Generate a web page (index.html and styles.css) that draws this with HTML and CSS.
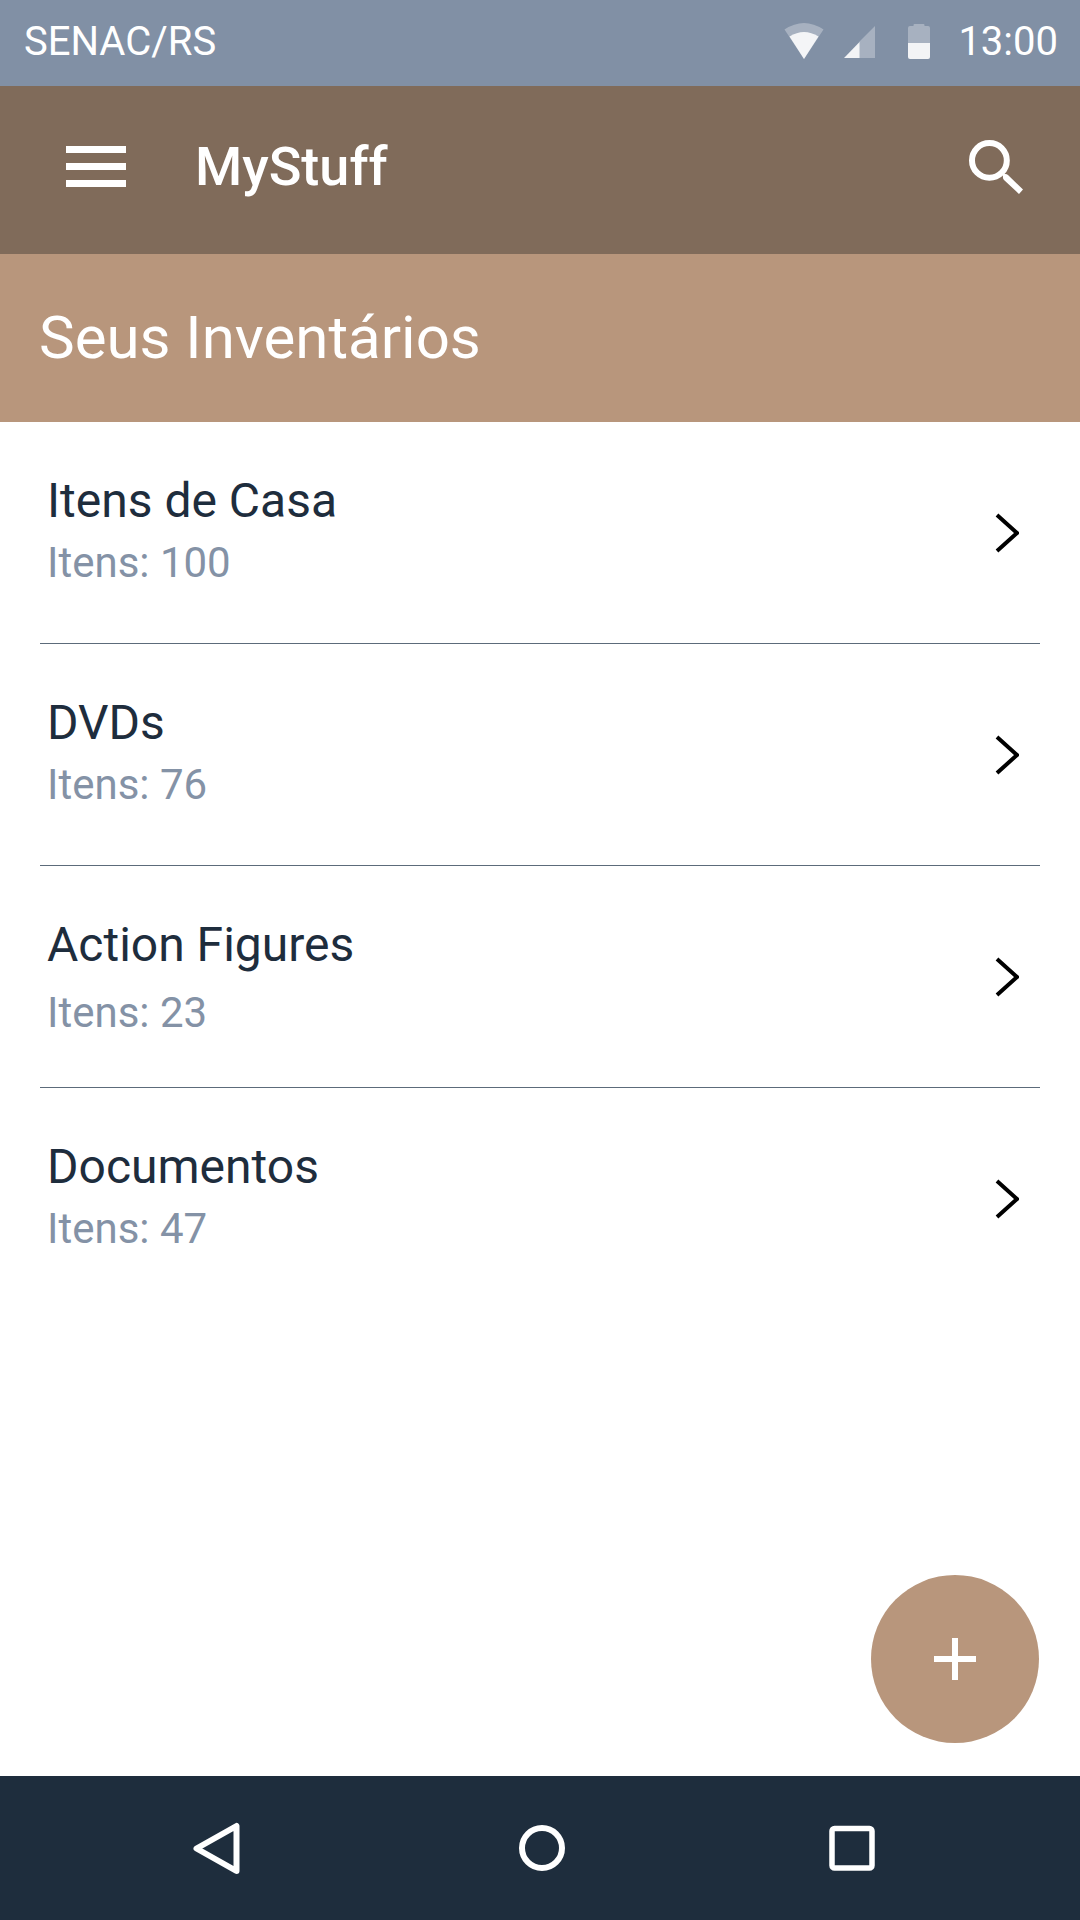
FILE: index.html
```html
<!DOCTYPE html>
<html lang="pt-BR">
<head>
<meta charset="utf-8">
<meta name="viewport" content="width=device-width, initial-scale=1">
<title>MyStuff</title>
<link rel="stylesheet" href="styles.css">
</head>
<body>
<div class="status-bar">
  <span class="carrier">SENAC/RS</span>
  <div class="status-icons">
    <svg class="wifi" width="40" height="40" viewBox="0 0 40 40" aria-hidden="true">
      <path d="M0.5 7.500Q20-5.500 39.500 7.500L20 37Z" fill="#fff" fill-opacity=".3"/>
      <path d="M5.500 14.500Q20 5.500 34.500 14.500L20 37Z" fill="#fff" fill-opacity=".87"/>
    </svg>
    <svg class="signal" width="32" height="40" viewBox="0 0 32 40" aria-hidden="true">
      <path d="M31 4V36H15V20Z" fill="#fff" fill-opacity=".3"/>
      <path d="M15.500 20V36H0Z" fill="#fff" fill-opacity=".9"/>
    </svg>
    <svg class="battery" width="22" height="40" viewBox="0 0 22 40" aria-hidden="true">
      <path d="M0 21V6Q0 4 2 4H5.500V3Q5.500 2 6.500 2H15.500Q16.500 2 16.500 3V4H20Q22 4 22 6V21Z" fill="#fff" fill-opacity=".3"/>
      <path d="M0 21H22V35Q22 37 20 37H2Q0 37 0 35Z" fill="#fff" fill-opacity=".9"/>
    </svg>
    <time class="clock">13:00</time>
  </div>
</div>
<header class="app-bar">
  <button class="icon-button" type="button" aria-label="Menu">
    <svg width="60" height="42" viewBox="0 0 60 42" shape-rendering="crispEdges"><path d="M0 0H60V7H0ZM0 17H60V24H0ZM0 34H60V41H0Z" fill="#fff"/></svg>
  </button>
  <h1 class="app-name">MyStuff</h1>
  <button class="icon-button" type="button" aria-label="Buscar">
    <svg width="54" height="54" viewBox="0 0 54 54"><circle cx="20.400" cy="20.400" r="17.400" fill="none" stroke="#fff" stroke-width="6"/><path d="M31 32L34 31L35.500 34Q37.500 33.500 39 35L54 49.500L50 54L35 40Q33.500 38.500 34 35.500Z" fill="#fff"/></svg>
  </button>
</header>
<main class="content">
  <h2 class="section-title">Seus Inventários</h2>
  <ul class="inventories">
    <li><a class="inventory" href="#casa">
      <span class="inventory-text"><span class="inventory-name">Itens de Casa</span><span class="inventory-count">Itens: 100</span></span>
      <svg class="chevron" width="24" height="40" viewBox="0 0 24 40" aria-hidden="true"><path d="M2 2L22 20L2 38"/></svg>
    </a></li>
    <li><a class="inventory" href="#dvds">
      <span class="inventory-text"><span class="inventory-name">DVDs</span><span class="inventory-count">Itens: 76</span></span>
      <svg class="chevron" width="24" height="40" viewBox="0 0 24 40" aria-hidden="true"><path d="M2 2L22 20L2 38"/></svg>
    </a></li>
    <li><a class="inventory" href="#figures">
      <span class="inventory-text spaced"><span class="inventory-name">Action Figures</span><span class="inventory-count">Itens: 23</span></span>
      <svg class="chevron" width="24" height="40" viewBox="0 0 24 40" aria-hidden="true"><path d="M2 2L22 20L2 38"/></svg>
    </a></li>
    <li><a class="inventory" href="#documentos">
      <span class="inventory-text"><span class="inventory-name">Documentos</span><span class="inventory-count">Itens: 47</span></span>
      <svg class="chevron" width="24" height="40" viewBox="0 0 24 40" aria-hidden="true"><path d="M2 2L22 20L2 38"/></svg>
    </a></li>
  </ul>
  <button class="add-button" type="button" aria-label="Adicionar inventário">
    <svg width="42" height="42" viewBox="0 0 42 42"><path d="M18 0H24V18H42V24H24V42H18V24H0V18H18Z" fill="#fff"/></svg>
  </button>
</main>
<nav class="system-nav" aria-label="Sistema">
  <button class="icon-button" type="button" aria-label="Voltar">
    <svg width="48" height="52" viewBox="0 0 48 52"><path d="M43.500 4V49L3.500 26.500Z" fill="none" stroke="#fff" stroke-width="6" stroke-linejoin="round"/></svg>
  </button>
  <button class="icon-button" type="button" aria-label="Início">
    <svg width="48" height="48" viewBox="0 0 48 48"><circle cx="24" cy="24" r="20" fill="none" stroke="#fff" stroke-width="6"/></svg>
  </button>
  <button class="icon-button" type="button" aria-label="Recentes">
    <svg width="48" height="48" viewBox="0 0 48 48"><rect x="4" y="4.500" width="40" height="39.500" rx="2.500" fill="none" stroke="#fff" stroke-width="5.500"/></svg>
  </button>
</nav>
</body>
</html>
```
FILE: styles.css
```css
* {
  box-sizing: border-box;
}

body {
  margin: 0;
  min-height: 100vh;
  display: flex;
  flex-direction: column;
  background: #fff;
  color: #1e2d3d;
  font-family: Roboto, "Liberation Sans", sans-serif;
}

button {
  border: 0;
  padding: 0;
  background: none;
  cursor: pointer;
}

svg {
  display: block;
}

.status-bar {
  display: flex;
  justify-content: space-between;
  align-items: center;
  min-height: 86px;
  padding: 0 22px 2px 24px;
  background: #8190a5;
  color: #fff;
  font-size: 40px;
  line-height: 48px;
}

.status-icons {
  display: flex;
  align-items: center;
}

.signal {
  margin-left: 20px;
}

.battery {
  margin-left: 32px;
}

.clock {
  margin-left: 28px;
}

.app-bar {
  display: flex;
  align-items: center;
  min-height: 168px;
  padding: 0 57px 6px 66px;
  background: #806b5a;
  color: #fff;
}

.app-name {
  flex: 1;
  margin: 0 0 0 69px;
  font-size: 54px;
  line-height: 64px;
  font-weight: 500;
}

.content {
  position: relative;
  flex: 1;
}

.section-title {
  margin: 0;
  padding: 48px 39px;
  background: #b8967c;
  color: #fff;
  font-size: 60px;
  line-height: 72px;
  font-weight: 400;
}

.inventories {
  margin: 0;
  padding: 0 40px;
  list-style: none;
}

.inventory {
  display: flex;
  justify-content: space-between;
  align-items: center;
  min-height: 222px;
  padding: 0 21px 0 7px;
  border-bottom: 1px solid #5c6b7a;
  color: inherit;
  text-decoration: none;
}

li:last-child .inventory {
  border-bottom-color: transparent;
}

.inventory-text {
  display: flex;
  flex-direction: column;
  align-self: flex-start;
  gap: 10px;
  padding-top: 51px;
}

.inventory-text.spaced {
  gap: 16px;
}

.inventory-name {
  font-size: 48px;
  line-height: 56px;
}

.inventory-count {
  color: #8492a6;
  font-size: 42px;
  line-height: 48px;
}

.chevron path {
  fill: none;
  stroke: #000;
  stroke-width: 4;
}

.add-button {
  position: absolute;
  right: 41px;
  bottom: 33px;
  display: grid;
  place-items: center;
  width: 168px;
  height: 168px;
  border-radius: 50%;
  background: #b8967c;
}

.system-nav {
  display: grid;
  grid-template-columns: 434fr 216fr 404fr;
  place-items: center;
  min-height: 144px;
  padding-right: 26px;
  background: #1e2d3d;
}
```
